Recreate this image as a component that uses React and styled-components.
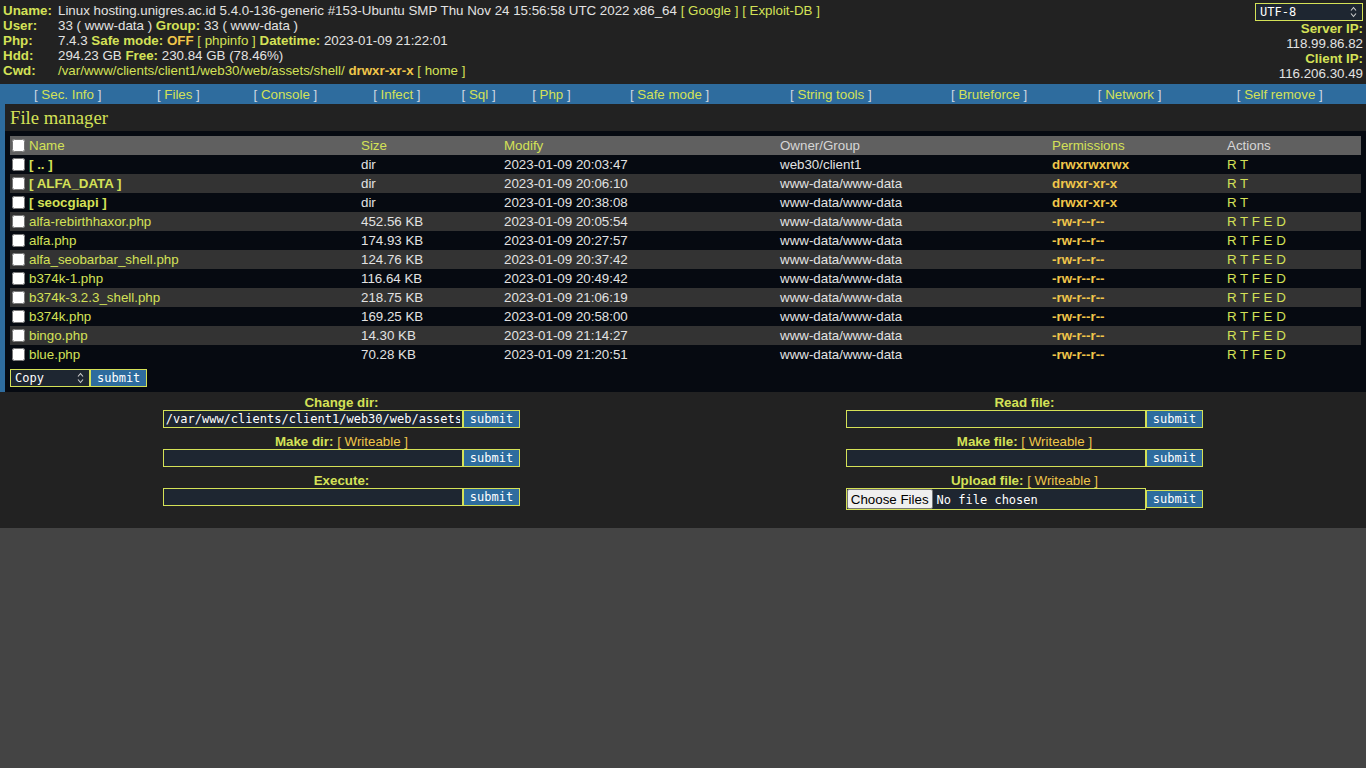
import React from "react";
import styled, { createGlobalStyle } from "styled-components";

const C = {
  lime: "#d4e157",
  gold: "#f0c64a",
  text: "#e2e2e2",
  bg: "#222222",
  page: "#444444",
  blue: "#2e6c9e",
  deep: "#060a11",
  field: "#1e2631",
  head: "#606060",
  stripe: "#333333",
};

const Global = createGlobalStyle`
  html, body { margin: 0; padding: 0; background: ${C.page}; }
  body {
    font-family: "Liberation Sans", Arial, sans-serif;
    font-size: 10pt;
    line-height: 15px;
    color: ${C.text};
  }
`;

const Shell = styled.div`
  background: ${C.bg};
`;

const Header = styled.header`
  display: flex;
  justify-content: space-between;
  align-items: flex-start;
  padding: 3px 3px 3px 3px;
`;

const InfoGrid = styled.div`
  display: grid;
  grid-template-columns: 55px auto;
  line-height: 15px;
  white-space: nowrap;
`;

const Label = styled.span`
  font-weight: bold;
  color: ${C.lime};
`;

const Lime = styled.b`
  color: ${C.lime};
`;

const Gold = styled.b`
  color: ${C.gold};
`;

const GoldText = styled.span`
  color: ${C.gold};
`;

const Link = styled.a`
  color: ${C.lime};
  text-decoration: none;
  cursor: pointer;
`;

const Side = styled.div`
  display: flex;
  flex-direction: column;
  align-items: flex-end;
  line-height: 15px;
  text-align: right;
`;

const SelectWrap = styled.span`
  position: relative;
  display: inline-block;
  line-height: 0;
`;

const Select = styled.select`
  appearance: none;
  -webkit-appearance: none;
  box-sizing: border-box;
  width: ${(p) => p.$w}px;
  height: 18px;
  border: 1px solid ${C.lime};
  border-radius: 0;
  background: ${C.field};
  color: #fff;
  font: 12px "DejaVu Sans Mono", monospace;
  padding: 0 16px 0 4px;
  margin: 0;
  outline: none;
`;

const Arrow = styled.svg`
  position: absolute;
  right: 6px;
  top: 50%;
  transform: translateY(-50%);
  pointer-events: none;
`;

const Nav = styled.table`
  width: 100%;
  border-collapse: collapse;
  background: ${C.blue};
  height: 20px;
`;

const NavCell = styled.td`
  text-align: center;
  padding: 0;
  white-space: nowrap;
  color: #cdd7e2;
`;

const Section = styled.section`
  border-left: 5px solid ${C.blue};
`;

const Title = styled.h1`
  margin: 0;
  background: ${C.bg};
  color: ${C.lime};
  font: normal 14pt/27px "Liberation Serif", "Times New Roman", serif;
  height: 27px;
  padding-left: 5px;
`;

const Panel = styled.div`
  background: ${C.deep};
  padding: 5px;
`;

const FileTable = styled.table`
  width: 100%;
  border-collapse: collapse;
  table-layout: fixed;
`;

const Th = styled.th`
  background: ${C.head};
  text-align: left;
  font-weight: normal;
  padding: 0 2px;
  height: 19px;
  white-space: nowrap;
  color: ${(p) => (p.$plain ? "#d6d6d6" : C.lime)};
`;

const Tr = styled.tr`
  background: ${(p) => (p.$alt ? C.stripe : "transparent")};
`;

const Td = styled.td`
  padding: 0 2px;
  height: 19px;
  white-space: nowrap;
  overflow: hidden;
  color: ${(p) => (p.$lime ? C.lime : C.text)};
`;

const Check = styled.input`
  width: 13px;
  height: 13px;
  margin: 0 4px 0 0;
  vertical-align: -2px;
`;

const DirName = styled.b`
  color: ${C.lime};
`;

const FileName = styled.span`
  color: ${C.lime};
`;

const ActionRow = styled.div`
  display: flex;
  margin-top: 5px;
`;

const Forms = styled.div`
  display: grid;
  grid-template-columns: 1fr 1fr;
  padding: 3px 0 18px;
`;

const Col = styled.div`
  display: flex;
  flex-direction: column;
  align-items: center;
  gap: 6px;
`;

const Field = styled.div`
  display: flex;
  flex-direction: column;
  align-items: center;
`;

const FieldLabel = styled.div`
  line-height: 15px;
  white-space: nowrap;
`;

const InputRow = styled.div`
  display: flex;
  align-items: center;
`;

const TextInput = styled.input`
  box-sizing: border-box;
  width: 300px;
  height: 18px;
  border: 1px solid ${C.lime};
  border-radius: 0;
  background: ${C.field};
  color: #fff;
  font: 12px "DejaVu Sans Mono", monospace;
  padding: 0 2px;
  margin: 0;
  outline: none;
`;

const FileInput = styled.input`
  box-sizing: border-box;
  width: 300px;
  height: 22px;
  border: 1px solid ${C.lime};
  background: ${C.field};
  color: #fff;
  font: 12px "DejaVu Sans Mono", monospace;
  padding: 0;
  margin: 0;
  &::file-selector-button {
    font: 10pt "Liberation Sans", Arial, sans-serif;
    color: #000;
    background: #efefef;
    border: 1px solid #767676;
    border-radius: 2px;
    height: 20px;
    padding: 0 3px;
    margin: 0 4px 0 0;
  }
`;

const Submit = styled.button`
  box-sizing: border-box;
  height: 18px;
  border: 1px solid ${C.lime};
  border-radius: 0;
  background: ${C.blue};
  color: #fff;
  font: 12px "DejaVu Sans Mono", monospace;
  padding: 0 6px;
  margin: 0;
  cursor: pointer;
`;

const Filler = styled.div`
  height: 240px;
`;

const Chevrons = () => (
  <Arrow width="7" height="12" viewBox="0 0 7 12">
    <path d="M1 4.5 L3.5 1.5 L6 4.5 M1 7.5 L3.5 10.5 L6 7.5" fill="none" stroke="#cfcfcf" strokeWidth="1.1" />
  </Arrow>
);

const Dropdown = ({ w, options }) => (
  <SelectWrap>
    <Select $w={w} defaultValue={options[0]}>
      {options.map((o) => (
        <option key={o}>{o}</option>
      ))}
    </Select>
    <Chevrons />
  </SelectWrap>
);

const navItems = [
  "Sec. Info",
  "Files",
  "Console",
  "Infect",
  "Sql",
  "Php",
  "Safe mode",
  "String tools",
  "Bruteforce",
  "Network",
  "Self remove",
];

const files = [
  { n: "[ .. ]", dir: true, s: "dir", m: "2023-01-09 20:03:47", o: "web30/client1", p: "drwxrwxrwx" },
  { n: "[ ALFA_DATA ]", dir: true, s: "dir", m: "2023-01-09 20:06:10", o: "www-data/www-data", p: "drwxr-xr-x" },
  { n: "[ seocgiapi ]", dir: true, s: "dir", m: "2023-01-09 20:38:08", o: "www-data/www-data", p: "drwxr-xr-x" },
  { n: "alfa-rebirthhaxor.php", s: "452.56 KB", m: "2023-01-09 20:05:54", o: "www-data/www-data", p: "-rw-r--r--" },
  { n: "alfa.php", s: "174.93 KB", m: "2023-01-09 20:27:57", o: "www-data/www-data", p: "-rw-r--r--" },
  { n: "alfa_seobarbar_shell.php", s: "124.76 KB", m: "2023-01-09 20:37:42", o: "www-data/www-data", p: "-rw-r--r--" },
  { n: "b374k-1.php", s: "116.64 KB", m: "2023-01-09 20:49:42", o: "www-data/www-data", p: "-rw-r--r--" },
  { n: "b374k-3.2.3_shell.php", s: "218.75 KB", m: "2023-01-09 21:06:19", o: "www-data/www-data", p: "-rw-r--r--" },
  { n: "b374k.php", s: "169.25 KB", m: "2023-01-09 20:58:00", o: "www-data/www-data", p: "-rw-r--r--" },
  { n: "bingo.php", s: "14.30 KB", m: "2023-01-09 21:14:27", o: "www-data/www-data", p: "-rw-r--r--" },
  { n: "blue.php", s: "70.28 KB", m: "2023-01-09 21:20:51", o: "www-data/www-data", p: "-rw-r--r--" },
];

const colWidths = [349, 143, 276, 272, 175, 136];

const FormField = ({ label, extra, children }) => (
  <Field>
    <FieldLabel>
      <Label>{label}</Label>
      {extra && <GoldText> [ Writeable ]</GoldText>}
    </FieldLabel>
    <InputRow>
      {children}
      <Submit type="button">submit</Submit>
    </InputRow>
  </Field>
);

export default function App() {
  return (
    <>
      <Global />
      <Shell>
        <Header>
          <InfoGrid>
            <Label>Uname:</Label>
            <span>
              Linux hosting.unigres.ac.id 5.4.0-136-generic #153-Ubuntu SMP Thu Nov 24 15:56:58 UTC 2022 x86_64{" "}
              <Link>[ Google ]</Link> <Link>[ Exploit-DB ]</Link>
            </span>
            <Label>User:</Label>
            <span>
              33 ( www-data ) <Lime>Group:</Lime> 33 ( www-data )
            </span>
            <Label>Php:</Label>
            <span>
              7.4.3 <Lime>Safe mode:</Lime> <Gold>OFF</Gold> <Link>[ phpinfo ]</Link> <Lime>Datetime:</Lime>{" "}
              2023-01-09 21:22:01
            </span>
            <Label>Hdd:</Label>
            <span>
              294.23 GB <Lime>Free:</Lime> 230.84 GB (78.46%)
            </span>
            <Label>Cwd:</Label>
            <span>
              <Link>/var/www/clients/client1/web30/web/assets/shell/</Link> <Gold>drwxr-xr-x</Gold>{" "}
              <Link>[ home ]</Link>
            </span>
          </InfoGrid>
          <Side>
            <Dropdown w={108} options={["UTF-8", "Windows-1251", "KOI8-R", "KOI8-U", "cp866"]} />
            <Label>Server IP:</Label>
            <span>118.99.86.82</span>
            <Label>Client IP:</Label>
            <span>116.206.30.49</span>
          </Side>
        </Header>

        <Nav>
          <tbody>
            <tr>
              {navItems.map((item) => (
                <NavCell key={item}>
                  [ <Link>{item}</Link> ]
                </NavCell>
              ))}
            </tr>
          </tbody>
        </Nav>

        <Section>
          <Title>File manager</Title>
          <Panel>
            <FileTable>
              <colgroup>
                {colWidths.map((w, i) => (
                  <col key={i} style={{ width: w }} />
                ))}
              </colgroup>
              <thead>
                <tr>
                  <Th>
                    <Check type="checkbox" />
                    Name
                  </Th>
                  <Th>Size</Th>
                  <Th>Modify</Th>
                  <Th $plain>Owner/Group</Th>
                  <Th>Permissions</Th>
                  <Th $plain>Actions</Th>
                </tr>
              </thead>
              <tbody>
                {files.map((f, i) => (
                  <Tr key={f.n} $alt={i % 2 === 1}>
                    <Td>
                      <Check type="checkbox" />
                      {f.dir ? <DirName>{f.n}</DirName> : <FileName>{f.n}</FileName>}
                    </Td>
                    <Td>{f.s}</Td>
                    <Td>{f.m}</Td>
                    <Td>{f.o}</Td>
                    <Td>
                      <Gold>{f.p}</Gold>
                    </Td>
                    <Td $lime>{f.dir ? "R T" : "R T F E D"}</Td>
                  </Tr>
                ))}
              </tbody>
            </FileTable>
            <ActionRow>
              <Dropdown w={80} options={["Copy", "Move", "Delete", "Zip", "Unzip"]} />
              <Submit type="button">submit</Submit>
            </ActionRow>
          </Panel>
        </Section>

        <Forms>
          <Col>
            <FormField label="Change dir:">
              <TextInput defaultValue="/var/www/clients/client1/web30/web/assets/shell/" />
            </FormField>
            <FormField label="Make dir:" extra>
              <TextInput />
            </FormField>
            <FormField label="Execute:">
              <TextInput />
            </FormField>
          </Col>
          <Col>
            <FormField label="Read file:">
              <TextInput />
            </FormField>
            <FormField label="Make file:" extra>
              <TextInput />
            </FormField>
            <FormField label="Upload file:" extra>
              <FileInput type="file" multiple />
            </FormField>
          </Col>
        </Forms>
      </Shell>
      <Filler />
    </>
  );
}
